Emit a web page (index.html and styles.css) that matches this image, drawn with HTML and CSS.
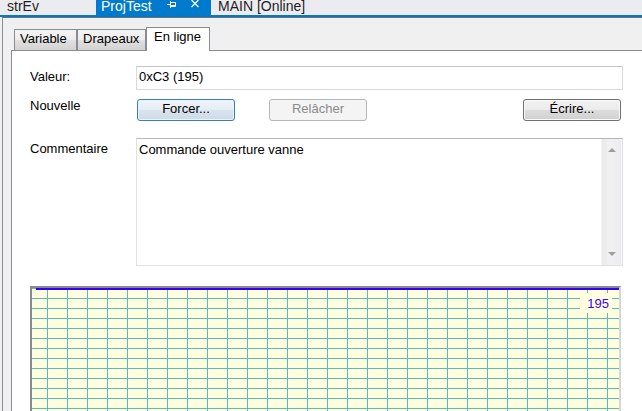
FILE: index.html
```html
<!DOCTYPE html>
<html lang="fr">
<head>
<meta charset="utf-8">
<title>En ligne</title>
<link rel="stylesheet" href="styles.css">
</head>
<body>
<div class="doctabs">
  <div class="doctab doctab-first">strEv</div>
  <div class="doctab doctab-active">
    <span>ProjTest</span>
    <svg class="icon-pin" width="9" height="8" viewBox="0 0 9 8"><path d="M0 4.5H3M3.5 1V8M3.5 2.5H8.5V6.5H3.5M4 5.5H8" stroke="#fff" fill="none"/></svg>
    <svg class="icon-close" width="8" height="8" viewBox="0 0 8 8"><path d="M0.5 0L7.5 7M7.5 0L0.5 7" stroke="#fff" stroke-width="1.2" fill="none"/></svg>
  </div>
  <div class="doctab">MAIN [Online]</div>
</div>
<div class="accent"></div>
<div class="window">
  <div class="tabs">
    <div class="tab-gap"></div>
    <div class="tab tab-variable">Variable</div>
    <div class="tab tab-drapeaux">Drapeaux</div>
    <div class="tab tab-active">En ligne</div>
    <div class="tab-fill"></div>
  </div>
  <div class="panel">
    <div class="row row-value">
      <div class="label">Valeur:</div>
      <div class="field">0xC3 (195)</div>
    </div>
    <div class="row row-buttons">
      <div class="label">Nouvelle</div>
      <div class="buttons">
        <div class="btn btn-default">Forcer...</div>
        <div class="btn btn-disabled">Relâcher</div>
        <div class="btn btn-normal">Écrire...</div>
      </div>
    </div>
    <div class="row row-comment">
      <div class="label">Commentaire</div>
      <div class="memo">
        <div class="memo-text">Commande ouverture vanne</div>
        <div class="scrollbar">
          <div class="arrow-up"></div>
          <div class="arrow-down"></div>
        </div>
      </div>
    </div>
    <div class="chart">
      <div class="trace"></div>
      <div class="chart-label">195</div>
    </div>
  </div>
</div>
</body>
</html>
```
FILE: styles.css
```css
html, body {
  margin: 0;
  padding: 0;
}
body {
  width: 642px;
  height: 411px;
  overflow: hidden;
  background: #f0f0f0;
  font-family: "Liberation Sans", Arial, sans-serif;
  font-size: 13px;
  color: #000;
}

/* document tabs */
.doctabs {
  display: flex;
  height: 15px;
  background: #ececf0;
  overflow: hidden;
  font-size: 14px;
  line-height: 13px;
  color: #1e1e1e;
  white-space: nowrap;
}
.doctab {
  padding-left: 7px;
}
.doctab-first {
  width: 96px;
  box-sizing: border-box;
}
.doctab-active {
  display: flex;
  align-items: flex-start;
  width: 115px;
  box-sizing: border-box;
  padding-left: 5px;
  background: #007acc;
  color: #fff;
}
.icon-pin {
  margin-left: 15px;
}
.icon-close {
  margin-left: 15px;
}
.accent {
  height: 2px;
  background: #007acc;
}

/* window */
.window {
  margin-left: 2px;
  border-top: 1px solid #6e6e6e;
  border-left: 1px solid #8a8a92;
  padding: 9px 0 0 8px;
}
.tabs {
  display: flex;
  align-items: flex-end;
  height: 24px;
}
.tab-gap {
  width: 3px;
  border-bottom: 1px solid #898c95;
}
.tab {
  box-sizing: border-box;
  height: 22px;
  border: 1px solid #898c95;
  padding: 0 0 2px 5px;
  line-height: 18px;
  white-space: nowrap;
  background: linear-gradient(#f4f4f4 0%, #ececec 50%, #e0e0e0 51%, #d3d3d3 100%);
}
.tab-variable {
  width: 63px;
}
.tab-drapeaux {
  width: 69px;
}
.tab-active {
  width: 64px;
  height: 24px;
  border-bottom: none;
  padding: 0 0 5px 7px;
  background: #fff;
}
.tab-fill {
  flex: 1;
  border-bottom: 1px solid #898c95;
}

/* panel */
.panel {
  background: #fff;
  border-left: 1px solid #898c95;
  padding: 15px 0 0 18px;
  height: 400px;
}
.row {
  display: flex;
  width: 593px;
}
.label {
  width: 106px;
  flex: none;
}
.row-value .label {
  line-height: 21px;
}
.field {
  flex: 1;
  height: 24px;
  box-sizing: border-box;
  border: 1px solid #d9dadf;
  border-top-color: #c4c6cc;
  padding: 0 2px;
  line-height: 19px;
}
.row-buttons {
  margin-top: 9px;
}
.row-buttons .label {
  line-height: 13px;
}
.buttons {
  flex: 1;
  display: flex;
  padding-left: 1px;
}
.btn {
  width: 98px;
  height: 22px;
  box-sizing: border-box;
  border: 1px solid #707070;
  border-radius: 3px;
  text-align: center;
  line-height: 18px;
  padding-bottom: 2px;
}
.btn-default {
  border-color: #3c7fb1;
  background: linear-gradient(#eef4f9 0%, #e4edf5 50%, #d8e4ee 51%, #cddbe7 100%);
  box-shadow: inset 0 0 0 1px #e8f4fc;
}
.btn-disabled {
  margin-left: 34px;
  border-color: #b5b8ba;
  background: #f4f4f4;
  color: #8b8b8b;
}
.btn-normal {
  margin-left: auto;
  margin-right: 2px;
  background: linear-gradient(#f2f2f2 0%, #ebebeb 50%, #dddddd 51%, #d0d0d0 100%);
  box-shadow: inset 0 0 0 1px #fafafa;
}
.row-comment {
  margin-top: 17px;
}
.row-comment .label {
  line-height: 22px;
}
.memo {
  flex: 1;
  display: flex;
  height: 128px;
  box-sizing: border-box;
  border: 1px solid #e0e1e6;
  border-top-color: #b4b6bc;
}
.memo-text {
  flex: 1;
  padding: 3px 2px;
  line-height: 15px;
}
.scrollbar {
  width: 21px;
  box-sizing: border-box;
  display: flex;
  flex-direction: column;
  justify-content: space-between;
  align-items: center;
  padding: 9px 0 9px;
  background: linear-gradient(to right, #e9e9e9, #f1f1f1 40%, #ededed);
  border-left: 1px solid #f7f7f7;
  border-right: 1px solid #f7f7f7;
}
.arrow-up {
  width: 0;
  height: 0;
  border-left: 4px solid transparent;
  border-right: 4px solid transparent;
  border-bottom: 4px solid #9c9c9c;
}
.arrow-down {
  width: 0;
  height: 0;
  border-left: 4px solid transparent;
  border-right: 4px solid transparent;
  border-top: 4px solid #9c9c9c;
}

/* chart */
.chart {
  position: relative;
  margin-top: 20px;
  width: 591px;
  height: 140px;
  box-sizing: border-box;
  border-top: 2px solid #8a8a8a;
  border-left: 2px solid #8a8a8a;
  border-right: 2px solid #d6d6d6;
  background-color: #ffffe0;
  background-image:
    linear-gradient(to right, #58bcbc 1px, transparent 1px),
    linear-gradient(to bottom, #58bcbc 1px, transparent 1px);
  background-size: 20px 10px, 20px 10px;
  background-position: 15px 0, 0 0;
}
.trace {
  height: 2px;
  margin-left: 4px;
  background: #3300ff;
}
.chart-label {
  position: absolute;
  top: 5px;
  right: 7px;
  width: 32px;
  height: 20px;
  box-sizing: border-box;
  padding: 2px 3px 0 0;
  background: #ffffe0;
  color: #3b00ff;
  font-size: 13px;
  line-height: 18px;
  text-align: right;
}
```
